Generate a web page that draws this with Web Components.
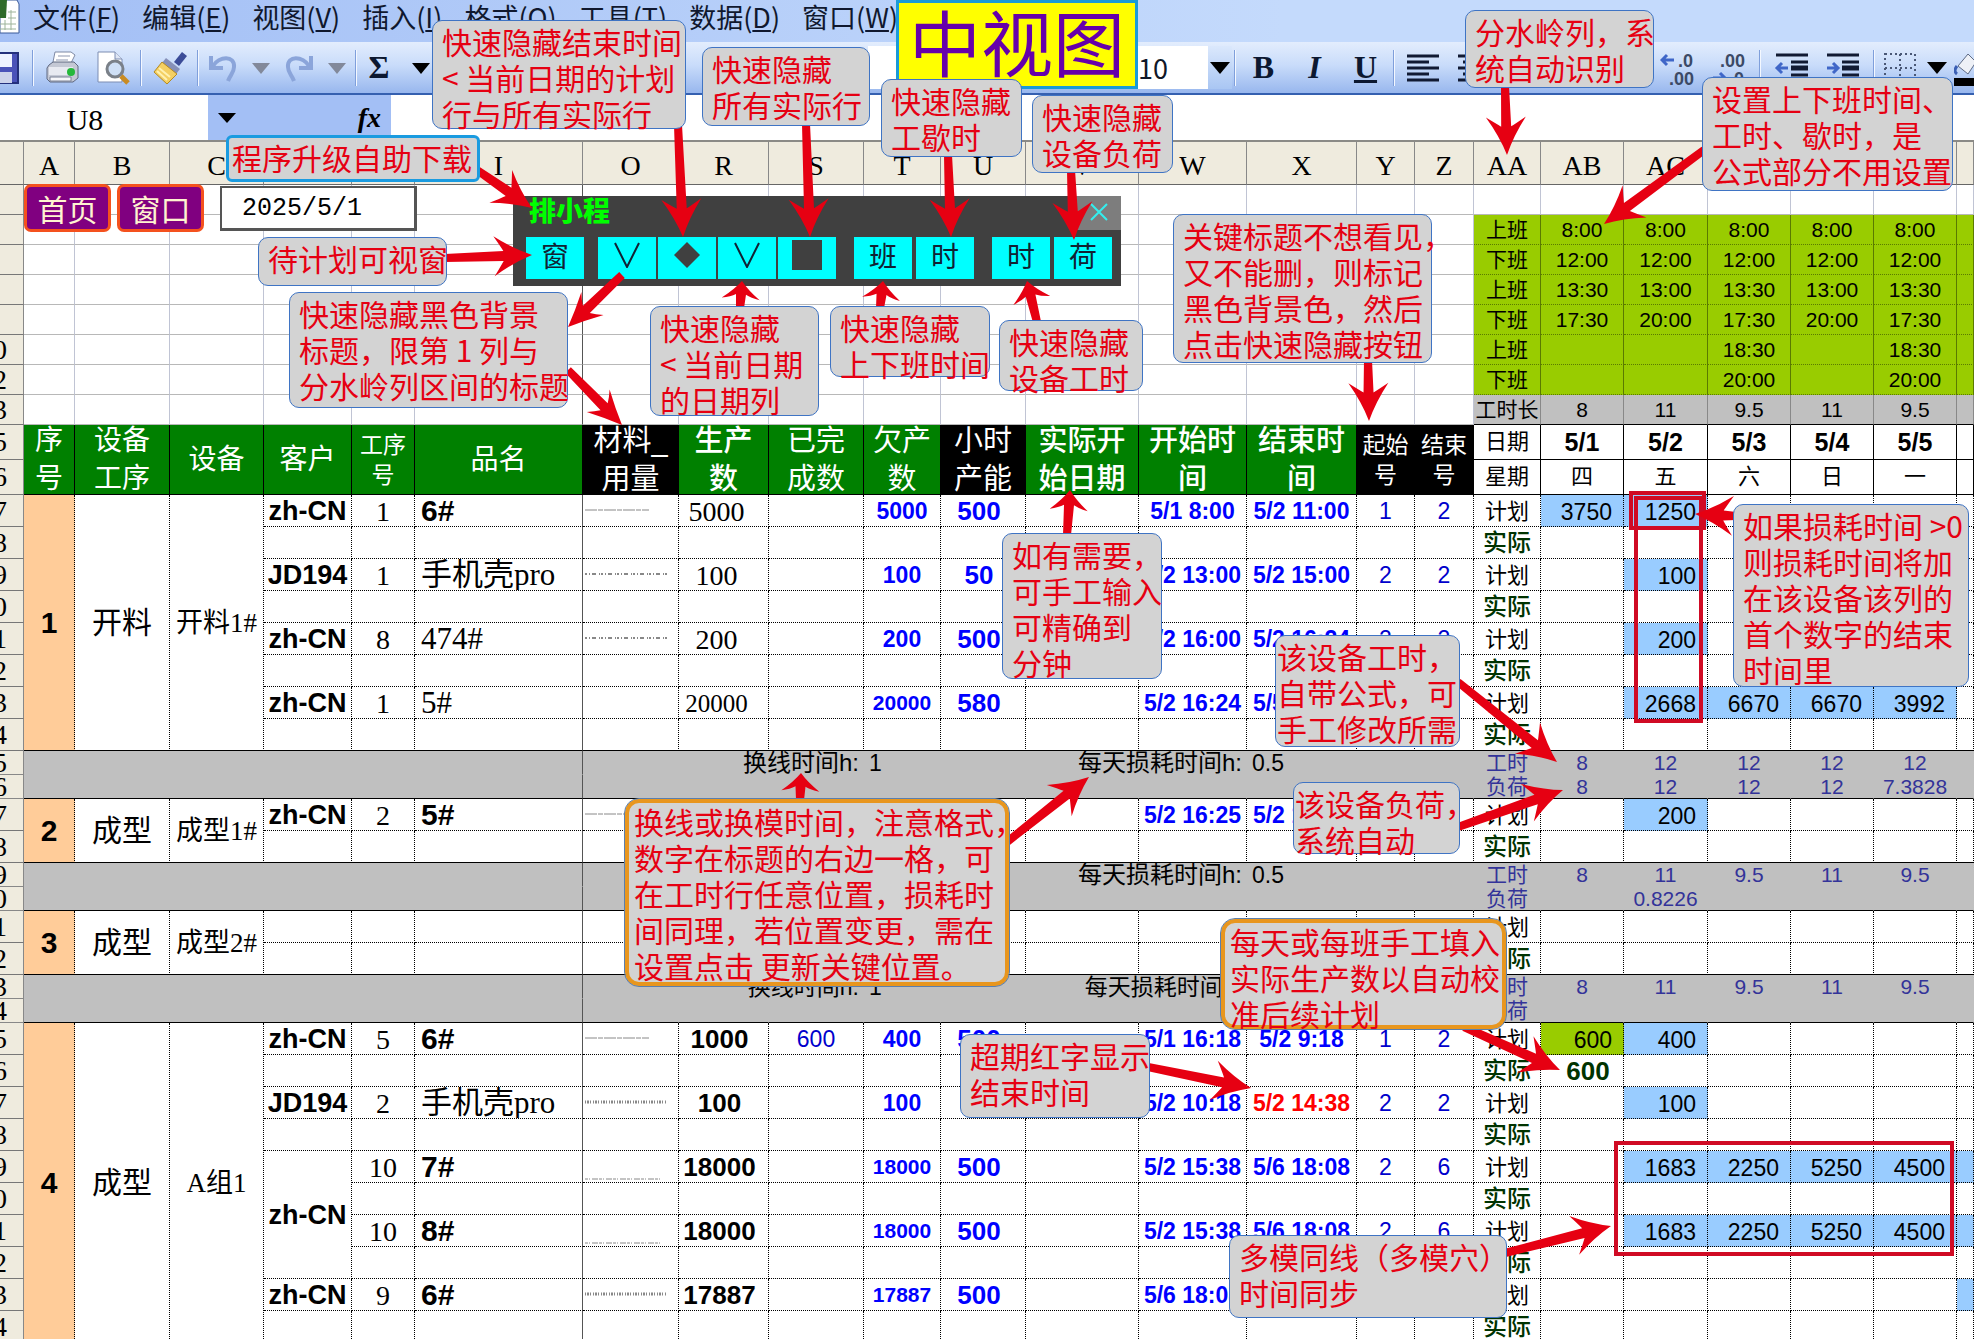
<!DOCTYPE html>
<html lang="zh-CN">
<head>
<meta charset="utf-8">
<title>中视图</title>
<style>
  html, body {
    height: 100%;
    margin: 0;
  }

  body {
    font-family: 'Noto Sans CJK SC', sans-serif;
    color: #000;
    background: #fff;
    overflow: hidden;
  }
</style>
</head>
<body>
<sheet-app></sheet-app>

<script>
const SERIF = "'Liberation Serif', 'Noto Sans CJK SC', serif"

class MenuBar extends HTMLElement {
  constructor () {
    super()
    this.shadow = this.attachShadow({ mode: 'open' })
  }

  connectedCallback () {
    const items = [['文件', 'F'], ['编辑', 'E'], ['视图', 'V'], ['插入', 'I'], ['格式', 'O'], ['工具', 'T'], ['数据', 'D'], ['窗口', 'W']]
    this.shadow.innerHTML =
      /* html */`
    <style>
      :host {
        display: flex;
        align-items: flex-start;
        height: 42px;
        background: linear-gradient(90deg, #a3bff5, #c4dafc 65%);
      }

      svg {
        width: 20px;
        height: 36px;
        margin-right: 13px;
        flex: none;
      }

      nav {
        display: flex;
        gap: 22px;
      }

      a {
        color: #10182e;
        text-decoration: none;
        font-size: 27px;
        line-height: 34px;
        white-space: nowrap;
      }
    </style>
    <svg viewBox="0 0 20 36">
      <path d="M0 0h17l2 4v29H0z" fill="#fff" stroke="#3a5a9a"/>
      <path d="M0 0h7l-1 18H0z" fill="#2f6b2a"/>
      <path d="M8 12h8M8 18h8M0 24h16M0 29h16M11 10v20M5 20v10" stroke="#9db39a" stroke-width="1"/>
    </svg>
    <nav>${items.map(([t, k]) => `<a href="#">${t}(<u>${k}</u>)</a>`).join('')}</nav>
      `
  }
}

class ToolBar extends HTMLElement {
  constructor () {
    super()
    this.shadow = this.attachShadow({ mode: 'open' })
  }

  connectedCallback () {
    this.shadow.innerHTML =
      /* html */`
    <style>
      :host {
        display: flex;
        justify-content: space-between;
        align-items: center;
        height: 53px;
        box-sizing: border-box;
        border-bottom: 2px solid #3560b0;
        background: linear-gradient(#e3edfd, #c9dcfa 45%, #98b7ee);
        overflow: hidden;
      }

      .group {
        display: flex;
        align-items: center;
        height: 50px;
      }

      button {
        border: 0;
        padding: 0;
        margin: 0;
        background: none;
        width: 51px;
        height: 40px;
        display: flex;
        align-items: center;
        justify-content: center;
        font: bold 32px ${SERIF};
        color: #0c1830;
      }

      button svg {
        width: 36px;
        height: 36px;
      }

      button.drop {
        width: 25px;
      }

      button.drop svg {
        width: 20px;
        height: 12px;
      }

      .cut {
        width: 20px;
        justify-content: flex-end;
      }

      i.sep {
        width: 1px;
        height: 36px;
        margin: 0 5px;
        background: #7f9fdb;
        border-right: 1px solid #f4f8ff;
      }

      i.thin {
        margin: 0 2px;
      }

      .box {
        display: flex;
        height: 43px;
        background: #fff;
      }

      select {
        appearance: none;
        border: 0;
        background: none;
        height: 43px;
        padding: 0 0 0 12px;
        font: 27px 'Noto Sans CJK SC', sans-serif;
        color: #101828;
      }

      .name {
        width: 230px;
      }

      .size {
        width: 82px;
      }

      .box span {
        width: 24px;
        display: flex;
        align-items: center;
        justify-content: center;
        background: linear-gradient(#dbe8fc, #a9c6f3);
      }
    </style>
    <div class="group">
      <button class="cut" aria-label="保存"><svg viewBox="16 0 20 36" style="width:20px"><path d="M4 3h30v30H4z" fill="#4a52b8" stroke="#24307c" stroke-width="2"/><path d="M12 4h16v13H12z" fill="#eef2ff"/><path d="M14 22h14v11H14z" fill="#cdd3ea"/></svg></button>
      <i class="sep thin" style="margin-left:12px"></i>
      <button aria-label="打印"><svg viewBox="0 0 36 36"><path d="M11 2h16l4 3-6 12H8z" fill="#fff" stroke="#7f8aa5"/><path d="M14 6h12M12 10h12" stroke="#8d97b0"/><path d="M5 15l4-3h21l4 4v12l-5 4H6l-3-3V18z" fill="#c4c8d4" stroke="#5f6880"/><path d="M5 17h24v8H5z" fill="#e8eaf1"/><path d="M6 27h21v4H6z" fill="#f7f7fa" stroke="#7a8296"/><circle cx="27" cy="22" r="4" fill="#25b83a"/></svg></button>
      <button aria-label="打印预览"><svg viewBox="0 0 36 36"><path d="M3 2h17l7 7v23H3z" fill="#fff" stroke="#7c8db2"/><path d="M20 2v7h7" fill="#dfe6f4" stroke="#7c8db2"/><circle cx="20" cy="19" r="8" fill="#cfe0f6" stroke="#7a8088" stroke-width="3"/><path d="M26 26l7 7" stroke="#c98b22" stroke-width="5"/></svg></button>
      <i class="sep thin"></i>
      <button aria-label="格式刷"><svg viewBox="0 0 36 36"><path d="M22 12l8-10 5 4-8 10z" fill="#3b4c98"/><path d="M14 8l14 11-4 5L10 13z" fill="#8690b8"/><path d="M10 12l15 12-10 10-13-12z" fill="#f4cf62" stroke="#b58a20"/><path d="M7 18l11 9M5 21l10 9" stroke="#fff1b0" stroke-width="2"/></svg></button>
      <i class="sep thin"></i>
      <button style="width:43px" aria-label="撤销"><svg viewBox="0 0 36 36"><path d="M6 6v12h12" fill="none" stroke="#8ba5da" stroke-width="4"/><path d="M8 16C14 6 30 5 29 17c0 6-4 8-6 14" fill="none" stroke="#8ba5da" stroke-width="4"/></svg></button>
      <button class="drop" style="width:33px" aria-label="撤销列表"><svg viewBox="0 0 20 12"><path d="M1 1h18L10 12z" fill="#82899a"/></svg></button>
      <button style="width:43px" aria-label="恢复"><svg viewBox="0 0 36 36"><path d="M30 6v12H18" fill="none" stroke="#8ba5da" stroke-width="4"/><path d="M28 16C22 6 6 5 7 17c0 6 4 8 6 14" fill="none" stroke="#8ba5da" stroke-width="4"/></svg></button>
      <button class="drop" style="width:33px" aria-label="恢复列表"><svg viewBox="0 0 20 12"><path d="M1 1h18L10 12z" fill="#82899a"/></svg></button>
      <i class="sep thin"></i>
      <button style="width:40px">Σ</button>
      <button class="drop" style="width:43px" aria-label="函数列表"><svg viewBox="0 0 20 12"><path d="M1 1h18L10 12z" fill="#000"/></svg></button>
    </div>
    <div class="group">
      <div class="box"><select class="name" aria-label="字体"><option></option></select><span></span></div>
      <div class="box" style="margin-left:4px"><select class="size" aria-label="字号"><option>10</option></select><span><svg width="20" height="12" viewBox="0 0 20 12"><path d="M0 0h20L10 12z"/></svg></span></div>
      <i class="sep thin"></i>
      <button>B</button>
      <button style="font-style:italic">I</button>
      <button style="text-decoration:underline">U</button>
      <i class="sep thin"></i>
      <button aria-label="左对齐"><svg viewBox="0 0 36 36"><path d="M2 6h32M2 12h22M2 18h32M2 24h22M2 30h32" stroke="#111a33" stroke-width="3"/></svg></button>
      <button aria-label="居中"><svg viewBox="0 0 36 36"><path d="M2 6h32M7 12h22M2 18h32M7 24h22M2 30h32" stroke="#111a33" stroke-width="3"/></svg></button>
      <button aria-label="右对齐"><svg viewBox="0 0 36 36"><path d="M2 6h32M12 12h22M2 18h32M12 24h22M2 30h32" stroke="#111a33" stroke-width="3"/></svg></button>
      <button aria-label="合并"><svg viewBox="0 0 36 36"><path d="M3 6h30v24H3z" fill="#fff" stroke="#32477f" stroke-width="2"/></svg></button>
      <button aria-label="货币"></button>
      <button aria-label="增加小数位"><svg viewBox="0 0 36 36"><path d="M2 10h12M7 5l-5 5 5 5" fill="none" stroke="#3f66c8" stroke-width="3"/><g font-family="Liberation Sans" font-size="18" font-weight="bold" fill="#3c4a66"><text x="18" y="17">.0</text><text x="9" y="35">.00</text></g></svg></button>
      <button aria-label="减少小数位"><svg viewBox="0 0 36 36"><path d="M2 28h12M9 23l5 5-5 5" fill="none" stroke="#3f66c8" stroke-width="3"/><g font-family="Liberation Sans" font-size="18" font-weight="bold" fill="#3c4a66"><text x="9" y="17">.00</text><text x="18" y="35">.0</text></g></svg></button>
      <i class="sep"></i>
      <button aria-label="减少缩进"><svg viewBox="0 0 36 36"><path d="M2 5h32M2 31h32M17 12h17M17 25h17" stroke="#111a33" stroke-width="3"/><path d="M17 18h17" stroke="#111a33" stroke-width="5"/><path d="M14 18H3M8 13l-5 5 5 5" fill="none" stroke="#3f66c8" stroke-width="3"/></svg></button>
      <button aria-label="增加缩进"><svg viewBox="0 0 36 36"><path d="M2 5h32M2 31h32M17 12h17M17 25h17" stroke="#111a33" stroke-width="3"/><path d="M17 18h17" stroke="#111a33" stroke-width="5"/><path d="M2 18h11M8 13l5 5-5 5" fill="none" stroke="#3f66c8" stroke-width="3"/></svg></button>
      <i class="sep"></i>
      <button style="width:40px" aria-label="边框"><svg viewBox="0 0 36 36"><path d="M3 4h30v28H3zM18 4v28M3 18h30" fill="none" stroke="#4a5876" stroke-width="2" stroke-dasharray="2 3"/></svg></button>
      <button class="drop" style="width:34px" aria-label="边框列表"><svg viewBox="0 0 20 12"><path d="M0 0h20L10 12z"/></svg></button>
      <button style="width:20px" aria-label="填充颜色"><svg viewBox="0 0 20 40" style="width:20px;height:40px"><path d="M4 18L14 6l8 8-8 12z" fill="#eef1f7" stroke="#5d6a85"/><path d="M3 18q-4 5 0 8" stroke="#3a5fb4" stroke-width="3" fill="none"/><path d="M0 30h20v8H0z"/></svg></button>
    </div>
      `
  }
}

class FormulaBar extends HTMLElement {
  constructor () {
    super()
    this.shadow = this.attachShadow({ mode: 'open' })
  }

  connectedCallback () {
    this.shadow.innerHTML =
      /* html */`
    <style>
      :host {
        display: flex;
        height: 47px;
        box-sizing: border-box;
        border-bottom: 2px solid #8b8a86;
        background: #fff;
      }

      input {
        border: 0;
        padding: 0;
        height: 45px;
        background: #fff;
        box-sizing: border-box;
      }

      .cell {
        width: 208px;
        padding: 4px 38px 0 0;
        text-align: center;
        font: 30px ${SERIF};
      }

      div {
        width: 183px;
        box-sizing: border-box;
        padding: 0 10px;
        background: #a3bff5;
        display: flex;
        align-items: center;
        justify-content: space-between;
        font: italic bold 28px ${SERIF};
      }

      .fx {
        flex: 1;
        min-width: 0;
      }
    </style>
    <input class="cell" aria-label="名称框" value="U8">
    <div><svg width="18" height="10" viewBox="0 0 18 10"><path d="M0 0h18L9 10z"/></svg><span>fx</span></div>
    <input class="fx" aria-label="编辑栏">
      `
  }
}

class SheetGrid extends HTMLElement {
  constructor () {
    super()
    this.shadow = this.attachShadow({ mode: 'open' })
  }

  // traces are the shrunk-to-fit material notes in column O
  trace (kind) {
    if (!kind) return ''
    const styles = {
      line: ['66', '12 1 5 1', 13, 1],
      dots: ['84', '2 2 1 2 4 3 1 1', 13, 2],
      low: ['78', '3 1 1 2 6 1', 26, 1],
      text: ['84', '1 1 2 1 1 2', 13, 3]
    }
    const [w, dash, y, thick] = styles[kind]
    return `<svg width="90" height="28" viewBox="0 0 90 28"><path d="M2 ${y}H${w}" stroke="#888" stroke-width="${thick}" stroke-dasharray="${dash}"/></svg>`
  }

  timeRows () {
    const times = [
      ['', '', '', '', '', '', ''],
      ['上班', '8:00', '8:00', '8:00', '8:00', '8:00'],
      ['下班', '12:00', '12:00', '12:00', '12:00', '12:00'],
      ['上班', '13:30', '13:00', '13:30', '13:00', '13:30'],
      ['下班', '17:30', '20:00', '17:30', '20:00', '17:30'],
      ['上班', '', '', '18:30', '', '18:30'],
      ['下班', '', '', '20:00', '', '20:00'],
      ['工时长', '8', '11', '9.5', '11', '9.5']
    ]
    const nums = ['', '', '', '', '', '0', '2', '3']
    return times.map((row, i) => {
      const kind = i === 0 ? '' : i === 7 ? 'sum' : 'shift'
      let cells = ''
      for (let c = 0; c < 16; c++) cells += `<td class="${c === 5 ? 'freeze' : ''}"></td>`
      for (let c = 0; c < 7; c++) cells += `<td class="${kind}">${row[c] || ''}</td>`
      return `<tr class="top"><th class="num"><span>${nums[i]}</span></th>${cells}</tr>`
    }).join('')
  }

  headRows () {
    const heads = [
      ['序<br>号', 'h28'], ['设备<br>工序', 'h28'], ['设备', 'h28'], ['客户', 'h28'], ['工序<br>号', 'h23'], ['品名', 'h28 freeze'],
      ['材料_<br>用量', 'h29 dark'], ['生产<br>数', 'h29 b'], ['已完<br>成数', 'h29'], ['欠产<br>数', 'h29'], ['小时<br>产能', 'h29 dark'],
      ['实际开<br>始日期', 'h29 b'], ['开始时<br>间', 'h29 b'], ['结束时<br>间', 'h29 b'], ['起始<br>号', 'h23 dark'], ['结束<br>号', 'h23 dark']
    ]
    const days = [['5/1', '四'], ['5/2', '五'], ['5/3', '六'], ['5/4', '日'], ['5/5', '一'], ['', '']]
    return `
    <tr class="head"><th class="num"><span>5</span></th>
      ${heads.map(([t, c]) => `<th rowspan="2" class="title ${c}"><div><span>${t}</span></div></th>`).join('')}
      <td class="day">日期</td>${days.map(d => `<td class="day date">${d[0]}</td>`).join('')}
    </tr>
    <tr class="head"><th class="num"><span>6</span></th>
      <td class="day">星期</td>${days.map(d => `<td class="day">${d[1]}</td>`).join('')}
    </tr>`
  }

  // an order takes two rows: the plan and what was really made
  order (o, first, last, nums) {
    const days = o.days || []
    const day = (v, i) => {
      const cls = (v === undefined || v === '') ? '' : (i === 0 && o.done) ? 'done' : 'plan'
      return `<td class="val ${cls}">${v === undefined || v === ' ' ? '' : v}</td>`
    }
    let plan = ''
    for (let i = 0; i < 6; i++) plan += day(days[i], i)
    const end = last ? 'end' : ''
    let who = ''
    if (o.who !== null) who = `<td class="who" rowspan="${o.span || 1}">${o.who || ''}</td>`
    const blank = o.span === 4 || o.who === null ? '' : '<td></td>'
    return `
    <tr><th class="num"><span>${nums[0]}</span></th>${first}${who}
      <td class="lo n28">${o.step || ''}</td>
      <td class="name freeze">${o.name || ''}</td>
      <td class="trace">${this.trace(o.trace)}</td>
      <td class="${o.bold ? 'q26' : 'lo qty ' + (o.qty > 9999 ? 'n25' : 'n28')}">${o.qty || ''}</td>
      <td class="blue n23">${o.made || ''}</td>
      <td class="blue b ${o.rest > 9999 ? 'n21' : 'n23'}">${o.rest || ''}</td>
      <td class="blue b n26">${o.rate || ''}</td>
      <td></td>
      <td class="blue b n23">${o.from || ''}</td>
      <td class="b n23 ${o.late ? 'late' : 'blue'}">${o.to || ''}</td>
      <td class="blue n23">${o.a || ''}</td>
      <td class="blue n23">${o.z || ''}</td>
      <td class="kind lo">计划</td>${plan}
    </tr>
    <tr class="${end}"><th class="num"><span>${nums[1]}</span></th>${blank}
      <td></td><td class="freeze"></td>${'<td></td>'.repeat(10)}
      <td class="kind real">实际</td><td class="made">${o.done || ''}</td>${'<td></td>'.repeat(5)}
    </tr>`
  }

  machine (m, n) {
    const rows = m.orders.length * 2
    let k = n
    return m.orders.map((o, i) => {
      const first = i === 0
        ? `<td class="no end" rowspan="${rows}">${m.no}</td><td class="n30 end" rowspan="${rows}">${m.proc}</td><td class="n27 end" rowspan="${rows}">${m.dev}</td>`
        : ''
      const nums = [k % 10, (k + 1) % 10]
      k += 2
      return this.order(o, first, i === m.orders.length - 1, nums)
    }).join('')
  }

  loadRows (g, n) {
    return `
    <tr class="load"><th class="num"><span>${n % 10}</span></th>
      <td colspan="6" class="freeze"></td><td></td>
      <td colspan="2" class="label ${g.small ? 'small' : ''}">${g.change ? '换线时间h:' : ''}</td><td class="left">${g.change || ''}</td><td></td>
      <td colspan="2" class="label ${g.small ? 'small' : ''}">每天损耗时间h:</td><td class="left">0.5</td><td></td><td></td>
      <td class="l">工时</td>${g.hours.map(v => `<td class="l">${v}</td>`).join('')}<td></td>
    </tr>
    <tr class="load end"><th class="num"><span>${(n + 1) % 10}</span></th>
      <td colspan="6" class="freeze"></td>${'<td></td>'.repeat(10)}
      <td class="l">负荷</td>${g.load.map(v => `<td class="l">${v}</td>`).join('')}<td></td>
    </tr>`
  }

  connectedCallback () {
    const widths = [24, 51, 95, 94, 88, 63, 168, 96, 90, 95, 77, 85, 113, 108, 110, 58, 59, 67, 83, 84, 83, 83, 83, 17]
    const letters = ['', 'A', 'B', 'C', 'D', 'H', 'I', 'O', 'R', 'S', 'T', 'U', 'V', 'W', 'X', 'Y', 'Z', 'AA', 'AB', 'AC', 'AD', 'AE', 'AF', '']
    const m1 = {
      no: 1, proc: '开料', dev: '开料1#', orders: [
        { who: 'zh-CN', step: 1, name: '<b>6#</b>', trace: 'line', qty: 5000, rest: 5000, rate: 500, from: '5/1 8:00', to: '5/2 11:00', a: 1, z: 2, days: [3750, 1250] },
        { who: 'JD194', step: 1, name: '手机壳pro', trace: 'dots', qty: 100, rest: 100, rate: 50, from: '5/2 13:00', to: '5/2 15:00', a: 2, z: 2, days: ['', 100] },
        { who: 'zh-CN', step: 8, name: '474#', trace: 'dots', qty: 200, rest: 200, rate: 500, from: '5/2 16:00', to: '5/2 16:24', a: 2, z: 2, days: ['', 200] },
        { who: 'zh-CN', step: 1, name: '5#', qty: 20000, rest: 20000, rate: 580, from: '5/2 16:24', to: '5/5 14:53', days: ['', 2668, 6670, 6670, 3992] }
      ]
    }
    const m2 = {
      no: 2, proc: '成型', dev: '成型1#', orders: [
        { who: 'zh-CN', step: 2, name: '<b>5#</b>', trace: 'line', from: '5/2 16:25', to: '5/2 16:49', days: ['', 200] }
      ]
    }
    const m3 = { no: 3, proc: '成型', dev: '成型2#', orders: [{}] }
    const m4 = {
      no: 4, proc: '成型', dev: 'A组1', orders: [
        { bold: 1, who: 'zh-CN', step: 5, name: '<b>6#</b>', trace: 'line', qty: 1000, made: 600, rest: 400, rate: 500, from: '5/1 16:18', to: '5/2 9:18', a: 1, z: 2, days: [600, 400], done: 600 },
        { bold: 1, who: 'JD194', step: 2, name: '手机壳pro', trace: 'text', qty: 100, rest: 100, from: '5/2 10:18', to: '5/2 14:38', late: 1, a: 2, z: 2, days: ['', 100] },
        { bold: 1, who: 'zh-CN', span: 4, step: 10, name: '<b>7#</b>', trace: 'low', qty: 18000, rest: 18000, rate: 500, from: '5/2 15:38', to: '5/6 18:08', a: 2, z: 6, days: ['', 1683, 2250, 5250, 4500, ' '] },
        { bold: 1, who: null, step: 10, name: '<b>8#</b>', trace: 'low', qty: 18000, rest: 18000, rate: 500, from: '5/2 15:38', to: '5/6 18:08', a: 2, z: 6, days: ['', 1683, 2250, 5250, 4500, ' '] },
        { bold: 1, who: 'zh-CN', step: 9, name: '<b>6#</b>', trace: 'text', qty: 17887, rest: 17887, rate: 500, from: '5/6 18:08', days: ['', '', '', '', '', ' '] }
      ]
    }
    this.shadow.innerHTML =
      /* html */`
    <style>
      :host {
        display: block;
        overflow: hidden;
      }

      table {
        width: 100%;
        table-layout: fixed;
        border-collapse: separate;
        border-spacing: 0;
        font-family: 'Liberation Sans', 'Noto Sans CJK SC', sans-serif;
      }

      td, th {
        box-sizing: border-box;
        height: 32px;
        padding: 0;
        border-right: 1px dotted #000;
        border-bottom: 1px dotted #000;
        line-height: 28px;
        text-align: center;
        font-weight: 400;
        white-space: nowrap;
        overflow: hidden;
      }

      thead th {
        height: 43px;
        padding-top: 5px;
        background: #efebde;
        border-right: 1px solid #888;
        border-bottom: 1px solid #666;
        font: 28px ${SERIF};
      }

      th.num {
        background: #efebde;
        border-right: 1px solid #888;
        border-bottom: 1px solid #777;
        font: 28px/22px ${SERIF};
      }

      th.num span {
        display: flex;
        justify-content: flex-end;
        padding-right: 16px;
        height: 22px;
      }

      .top td, .top th {
        height: 30px;
      }

      .top td {
        border-right: 1px solid #c0c4d4;
        border-bottom: 1px solid #b8b8b8;
        font-size: 21px;
      }

      .top td.shift {
        background: #9c0;
        border-color: #5a7a00;
        border-bottom-style: dotted;
      }

      .top td.sum {
        background: #c0c0c0;
        border-color: #888;
        border-bottom-color: #000;
      }

      td.freeze, .top td.freeze, th.freeze {
        border-right: 1px solid #555;
      }

      .head td, .head th {
        height: 35px;
      }

      .head .day {
        border-right: 1px solid #000;
        border-bottom: 1px solid #000;
        font-size: 22px;
      }

      .head .date {
        font-size: 25px;
        font-weight: 700;
      }

      .head .title {
        background: #008000;
        color: #fff;
        border-right: 1px solid #000;
        border-bottom: 1px solid #000;
      }

      .head .title.dark {
        background: #000;
      }

      .title div {
        height: 69px;
        display: flex;
        align-items: center;
        justify-content: center;
      }

      .h28 div {
        font-size: 28px;
        line-height: 38px;
      }

      .h29 div {
        font-size: 29px;
        line-height: 38px;
      }

      .h23 div {
        font-size: 23px;
        line-height: 30px;
      }

      .title.b div {
        font-weight: 500;
      }

      .no {
        background: #fc9;
        font-size: 30px;
        font-weight: 700;
      }

      .n30 {
        font: 30px/36px ${SERIF};
      }

      .n27 {
        font: 27px/36px ${SERIF};
      }

      .who {
        font-size: 27px;
        font-weight: 700;
      }

      .name {
        text-align: left;
        padding-left: 6px;
        font: 31px/28px ${SERIF};
      }

      .name b {
        font: bold 30px/28px 'Liberation Sans', sans-serif;
      }

      .trace {
        text-align: left;
      }

      .trace svg {
        display: block;
      }

      .lo {
        vertical-align: bottom;
      }

      .n28 {
        font: 28px/28px ${SERIF};
      }

      .n25 {
        font: 25px/28px ${SERIF};
      }

      .qty {
        padding-right: 14px;
      }

      .q26 {
        font-size: 26px;
        font-weight: 700;
        padding-right: 8px;
      }

      .n26 {
        font-size: 26px;
        padding-right: 8px;
      }

      .n23 {
        font-size: 23px;
      }

      .n21 {
        font-size: 21px;
      }

      td.b {
        font-weight: 700;
      }

      .blue {
        color: #00c;
      }

      td.blue.b {
        color: #00f;
      }

      .late {
        color: #f00;
      }

      .kind {
        font-size: 22px;
      }

      .real {
        font-size: 24px;
        font-weight: 500;
        color: #030;
      }

      .val {
        font-size: 23px;
        text-align: right;
        padding-right: 11px;
        vertical-align: bottom;
      }

      .plan {
        background: #9cf;
      }

      .done {
        background: #9c0;
      }

      .made {
        font-size: 26px;
        font-weight: 700;
        color: #030;
        padding-left: 12px;
      }

      .end td, td.end {
        border-bottom: 1px solid #000;
      }

      .load td, .load th {
        height: 24px;
        line-height: 22px;
        background: #c0c0c0;
        border-right-color: transparent;
        border-bottom-color: transparent;
      }

      .load th.num {
        background: #efebde;
        border-color: #888;
      }

      .load td.freeze {
        border-right-color: #555;
      }

      .load.end td {
        border-bottom: 1px solid #000;
      }

      .load .label {
        text-align: right;
        font-size: 24px;
        padding-right: 4px;
      }

      .load .small {
        font-size: 23px;
      }

      .load .left {
        text-align: left;
        font-size: 23px;
        padding-left: 5px;
      }

      .load .l {
        font-size: 21px;
        color: #339;
      }
    </style>
    <table>
      <colgroup>${widths.map(w => `<col style="width:${w}px">`).join('')}</colgroup>
      <thead><tr>${letters.map(l => `<th>${l}</th>`).join('')}</tr></thead>
      <tbody>
        ${this.timeRows()}
        ${this.headRows()}
        ${this.machine(m1, 17)}
        ${this.loadRows({ change: 1, hours: [8, 12, 12, 12, 12], load: [8, 12, 12, 12, 7.3828] }, 25)}
        ${this.machine(m2, 27)}
        ${this.loadRows({ hours: [8, 11, 9.5, 11, 9.5], load: ['', 0.8226, '', '', ''] }, 29)}
        ${this.machine(m3, 31)}
        ${this.loadRows({ change: 1, small: 1, hours: [8, 11, 9.5, 11, 9.5], load: ['', '', '', '', ''] }, 33)}
        ${this.machine(m4, 35)}
      </tbody>
    </table>
      `
  }
}

class FloatPanel extends HTMLElement {
  constructor () {
    super()
    this.shadow = this.attachShadow({ mode: 'open' })
  }

  connectedCallback () {
    this.shadow.innerHTML =
      /* html */`
    <style>
      :host {
        display: block;
        background: #404040;
      }

      header {
        display: flex;
        justify-content: space-between;
        height: 34px;
        padding-left: 16px;
        color: #0f0;
        font-size: 27px;
        line-height: 28px;
        font-weight: 900;
      }

      header button {
        width: 45px;
        border: 0;
        padding: 0;
        background: #7d7d7d;
      }

      .keys {
        display: flex;
        gap: 2px;
        padding: 7px 5px 0 13px;
      }

      .keys button {
        width: 58px;
        height: 42px;
        flex: none;
        border: 0;
        padding: 0 0 6px;
        background: #0ff;
        color: #123;
        font: 28px/36px 'Noto Sans CJK SC', sans-serif;
      }

      .keys svg {
        display: block;
        margin: 0 auto;
      }
    </style>
    <header><span>排小程</span><button aria-label="关闭"><svg width="18" height="18" viewBox="0 0 18 18"><path d="M1 1l16 16M17 1L1 17" stroke="#3ee" stroke-width="2"/></svg></button></header>
    <div class="keys">
      <button>窗</button>
      <button style="margin-left:12px" aria-label="隐藏标题"><svg width="28" height="26" viewBox="0 0 28 26"><path d="M2 1l12 24L26 1" fill="none" stroke="#123" stroke-width="2"/></svg></button>
      <button aria-label="隐藏计划行"><svg width="26" height="26" viewBox="0 0 26 26"><path d="M13 0l13 13-13 13L0 13z" fill="#404040"/></svg></button>
      <button aria-label="隐藏日期列"><svg width="28" height="26" viewBox="0 0 28 26"><path d="M2 1l12 24L26 1" fill="none" stroke="#123" stroke-width="2"/></svg></button>
      <button aria-label="隐藏实际行"><svg width="30" height="30" viewBox="0 0 30 30"><path d="M0 0h30v30H0z" fill="#404040"/></svg></button>
      <button style="margin-left:16px">班</button>
      <button style="margin-left:2px">时</button>
      <button style="margin-left:16px">时</button>
      <button style="margin-left:2px">荷</button>
    </div>
      `
  }
}

class NoteBox extends HTMLElement {
  constructor () {
    super()
    this.shadow = this.attachShadow({ mode: 'open' })
  }

  connectedCallback () {
    const [x, y, w, h] = this.getAttribute('at').split(' ')
    this.shadow.innerHTML =
      /* html */`
    <style>
      :host {
        display: block;
        position: absolute;
        left: ${x}px;
        top: ${y}px;
        width: ${w}px;
        height: ${h}px;
        box-sizing: border-box;
        padding: 2px 0 0 9px;
        border: 1px solid #3f74c4;
        border-radius: 10px;
        background: #d3d3d3;
        color: #e60012;
        font-size: 30px;
        line-height: 36px;
      }

      :host([tone=blue]) {
        border: 3px solid #1a9be0;
        border-radius: 6px;
        padding: 1px 0 0 3px;
      }

      :host([tone=orange]) {
        border: 4px solid #e8961e;
        outline: 1px solid #5a7fae;
        border-radius: 14px;
        padding: 0 0 0 5px;
      }

      :host([tight]) {
        padding-left: 1px;
      }

      slot {
        display: block;
        white-space: pre;
      }
    </style>
    <slot></slot>
      `
  }
}

class NoteArrows extends HTMLElement {
  constructor () {
    super()
    this.shadow = this.attachShadow({ mode: 'open' })
  }

  // x1 y1 -> x2 y2, head length, half width of head
  arrow ([x1, y1, x2, y2, len = 38, half = 20]) {
    const d = Math.hypot(x2 - x1, y2 - y1)
    const a = Math.atan2(y2 - y1, x2 - x1) * 180 / Math.PI
    const neck = d - len * 0.75
    return `<path transform="translate(${x1} ${y1}) rotate(${a})" d="M0 -4L${neck} -5Q${neck - 3} -10 ${d - len} ${-half}Q${d - len / 2} -7 ${d} 0Q${d - len / 2} 7 ${d - len} ${half}Q${neck - 3} 10 ${neck} 5L0 4z"/>`
  }

  connectedCallback () {
    const arrows = [
      [477, 170, 532, 208], [445, 258, 532, 255], [622, 275, 568, 327, 34, 16], [568, 370, 622, 425, 34, 16],
      [678, 125, 683, 237], [806, 124, 810, 237], [948, 155, 951, 237], [1071, 170, 1074, 240],
      [740, 308, 742, 281, 18, 19], [880, 308, 883, 281, 18, 19], [1037, 322, 1027, 281, 20, 19],
      [1505, 86, 1507, 155], [1704, 150, 1604, 224], [1368, 360, 1369, 421],
      [1067, 535, 1070, 490, 20, 19], [1736, 516, 1695, 514, 38, 20],
      [1458, 682, 1557, 762], [1458, 827, 1563, 790], [800, 800, 801, 773, 18, 19],
      [1007, 842, 1089, 777], [1148, 1067, 1251, 1088], [1464, 1027, 1560, 1070], [1505, 1253, 1611, 1226]
    ]
    this.shadow.innerHTML =
      /* html */`
    <style>
      :host {
        display: block;
        position: absolute;
        inset: 0;
        pointer-events: none;
      }

      svg {
        display: block;
        width: 100%;
        height: 100%;
      }
    </style>
    <svg>
      <g fill="none" stroke="#d00a24" stroke-width="4">
        <rect x="1631" y="493" width="73" height="35"/>
        <rect x="1636" y="498" width="65" height="223"/>
        <rect x="1616" y="1143" width="336" height="111"/>
      </g>
      <g fill="#e60012">${arrows.map(a => this.arrow(a)).join('')}</g>
    </svg>
      `
  }
}

class SheetApp extends HTMLElement {
  constructor () {
    super()
    this.shadow = this.attachShadow({ mode: 'open' })
  }

  connectedCallback () {
    this.shadow.innerHTML =
      /* html */`
    <style>
      :host {
        display: flex;
        flex-direction: column;
        position: relative;
        height: 100vh;
        overflow: hidden;
      }

      menu-bar, tool-bar, formula-bar {
        flex: none;
      }

      sheet-grid {
        flex: 1;
        min-height: 0;
      }

      .links {
        position: absolute;
        left: 24px;
        top: 184px;
        display: flex;
        gap: 6px;
      }

      .links button {
        width: 87px;
        height: 48px;
        box-sizing: border-box;
        padding: 0;
        border: 3px solid #f4511e;
        border-radius: 7px;
        background: #800080;
        color: #fff3d0;
        font: 30px/40px 'Noto Sans CJK SC', sans-serif;
      }

      .links input {
        width: 197px;
        height: 45px;
        margin: 2px 0 0 10px;
        box-sizing: border-box;
        border: 2px solid #555;
        border-width: 2px 3px 3px 2px;
        padding: 0 0 0 20px;
        background: #fff;
        font: 25px 'Liberation Mono', monospace;
        color: #000;
      }

      float-panel {
        position: absolute;
        left: 513px;
        top: 196px;
        width: 608px;
        height: 90px;
      }

      h1 {
        position: absolute;
        left: 896px;
        top: 0;
        width: 242px;
        height: 89px;
        box-sizing: border-box;
        margin: 0;
        border: 3px solid #1a9bd8;
        background: #ff0;
        color: #60a;
        text-align: center;
        font-size: 72px;
        line-height: 74px;
        font-weight: 400;
      }
    </style>
    <menu-bar></menu-bar>
    <tool-bar></tool-bar>
    <formula-bar></formula-bar>
    <sheet-grid></sheet-grid>
    <div class="links">
      <button>首页</button>
      <button>窗口</button>
      <input aria-label="日期" value="2025/5/1">
    </div>
    <float-panel></float-panel>
    <h1>中视图</h1>
    <note-arrows></note-arrows>
    <note-box at="432 20 254 109">快速隐藏结束时间
&lt; 当前日期的计划
行与所有实际行</note-box>
    <note-box at="702 47 168 79">快速隐藏
所有实际行</note-box>
    <note-box at="881 79 141 78">快速隐藏
工歇时</note-box>
    <note-box at="1032 95 141 78">快速隐藏
设备负荷</note-box>
    <note-box tone="blue" at="226 135 254 47">程序升级自助下载</note-box>
    <note-box at="258 237 189 49">待计划可视窗</note-box>
    <note-box at="289 292 279 116">快速隐藏黑色背景
标题，限第 1 列与
分水岭列区间的标题</note-box>
    <note-box at="650 306 169 110">快速隐藏
&lt; 当前日期
的日期列</note-box>
    <note-box at="830 306 160 71">快速隐藏
上下班时间</note-box>
    <note-box at="999 320 144 71">快速隐藏
设备工时</note-box>
    <note-box at="1465 10 189 78">分水岭列，系
统自动识别</note-box>
    <note-box at="1702 77 251 114">设置上下班时间、
工时、歇时，是
公式部分不用设置</note-box>
    <note-box at="1173 214 259 149">关键标题不想看见，
又不能删，则标记
黑色背景色，然后
点击快速隐藏按钮</note-box>
    <note-box at="1002 533 160 146">如有需要，
可手工输入
可精确到
分钟</note-box>
    <note-box at="1733 504 236 183">如果损耗时间 &gt;0
则损耗时间将加
在该设备该列的
首个数字的结束
时间里</note-box>
    <note-box tight at="1275 635 185 112">该设备工时，
自带公式，可
手工修改所需</note-box>
    <note-box tight at="1293 782 167 72">该设备负荷，
系统自动</note-box>
    <note-box tone="orange" at="625 799 384 187">换线或换模时间，注意格式，
数字在标题的右边一格，可
在工时行任意位置，损耗时
间同理，若位置变更，需在
设置点击 更新关键位置。</note-box>
    <note-box tone="orange" at="1221 919 285 110">每天或每班手工填入
实际生产数以自动校
准后续计划</note-box>
    <note-box at="960 1034 190 84">超期红字显示
结束时间</note-box>
    <note-box at="1229 1235 278 83">多模同线（多模穴）
时间同步</note-box>
      `
  }
}

customElements.define('menu-bar', MenuBar)
customElements.define('tool-bar', ToolBar)
customElements.define('formula-bar', FormulaBar)
customElements.define('sheet-grid', SheetGrid)
customElements.define('float-panel', FloatPanel)
customElements.define('note-box', NoteBox)
customElements.define('note-arrows', NoteArrows)
customElements.define('sheet-app', SheetApp)
</script>
</body>
</html>
